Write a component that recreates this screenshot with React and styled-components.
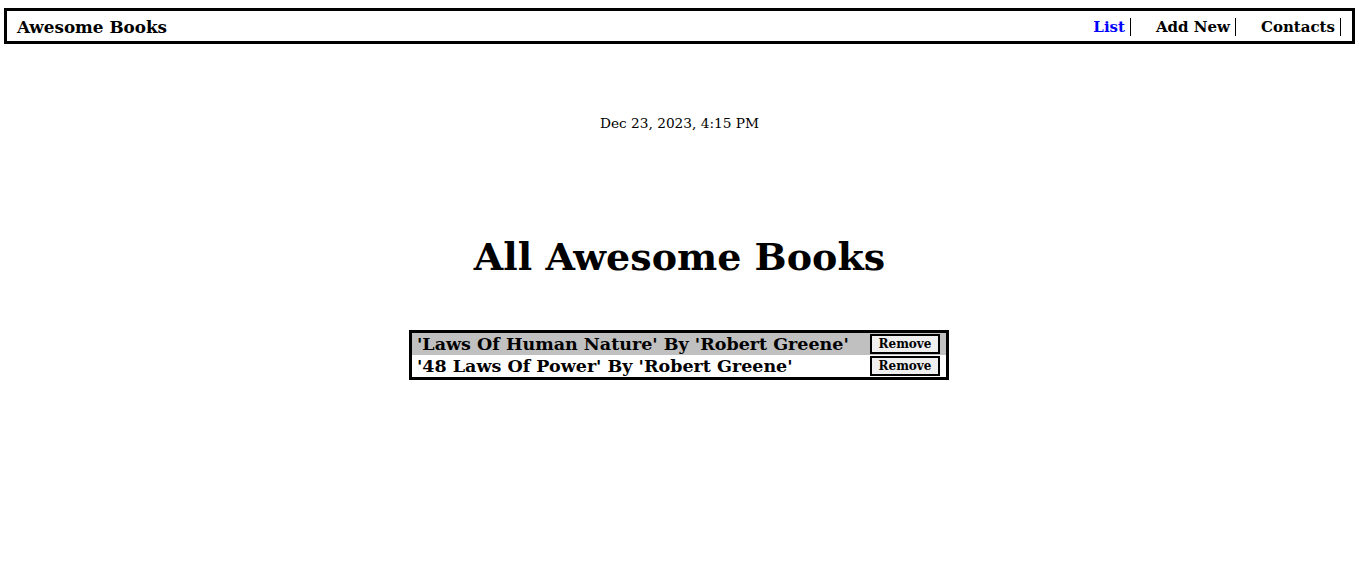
import styled, { createGlobalStyle } from "styled-components"

const books = [
  { id: 1, title: "Laws Of Human Nature", author: "Robert Greene" },
  { id: 2, title: "48 Laws Of Power", author: "Robert Greene" },
]

export default function App() {
  return (
    <>
      <GlobalStyle />
      <Page>
        <Header>
          <Logo>Awesome Books</Logo>
          <Nav>
            <NavLink $active>List</NavLink>
            <NavLink>Add New</NavLink>
            <NavLink>Contacts</NavLink>
          </Nav>
        </Header>
        <Main>
          <DateLine>Dec 23, 2023, 4:15 PM</DateLine>
          <Title>All Awesome Books</Title>
          <BookList>
            {books.map((book, i) => (
              <BookRow key={book.id} $striped={i % 2 === 0}>
                <BookText>
                  '{book.title}' By '{book.author}'
                </BookText>
                <RemoveButton>Remove</RemoveButton>
              </BookRow>
            ))}
          </BookList>
        </Main>
      </Page>
    </>
  )
}

const GlobalStyle = createGlobalStyle`
  body {
    margin: 0;
    background: #fff;
    color: #000;
    font-family: "DejaVu Serif", "Liberation Serif", serif;
  }
`

const Page = styled.div`
  padding: 8px 7px 0 4px;
`

const Header = styled.header`
  display: flex;
  justify-content: space-between;
  align-items: center;
  height: 28px;
  border: 3px solid #000;
  padding: 2px 13px 0 10px;
`

const Logo = styled.div`
  font-size: 16.8px;
  font-weight: bold;
`

const Nav = styled.nav`
  display: flex;
  align-items: center;
  gap: 25px;
  margin-right: -2px;
`

const NavLink = styled.span`
  font-size: 15px;
  font-weight: bold;
  line-height: 18px;
  padding-right: 5px;
  border-right: 1px solid #000;
  color: ${(p) => (p.$active ? "#0000ff" : "#000")};
`

const Main = styled.main`
  display: flex;
  flex-direction: column;
  align-items: center;
`

const DateLine = styled.p`
  margin: 69px 0 0;
  font-size: 13.7px;
  line-height: 20px;
`

const Title = styled.h1`
  margin: 99px 0 0;
  font-size: 38px;
  line-height: 50px;
`

const BookList = styled.ul`
  list-style: none;
  margin: 48px 0 0 -1px;
  padding: 0;
  width: 540px;
  box-sizing: border-box;
  border: 3px solid #000;
`

const BookRow = styled.li`
  display: flex;
  justify-content: space-between;
  align-items: center;
  height: 22px;
  background: ${(p) => (p.$striped ? "#c0c0c0" : "#fff")};
`

const BookText = styled.span`
  padding-left: 5px;
  font-size: 17.5px;
  font-weight: bold;
  white-space: nowrap;
`

const RemoveButton = styled.button`
  width: 70px;
  height: 20px;
  margin-right: 6px;
  padding: 0;
  border: 2px solid #000;
  background: #efefef;
  font-family: "DejaVu Serif", "Liberation Serif", serif;
  font-size: 12px;
  font-weight: bold;
  color: #000;
`
